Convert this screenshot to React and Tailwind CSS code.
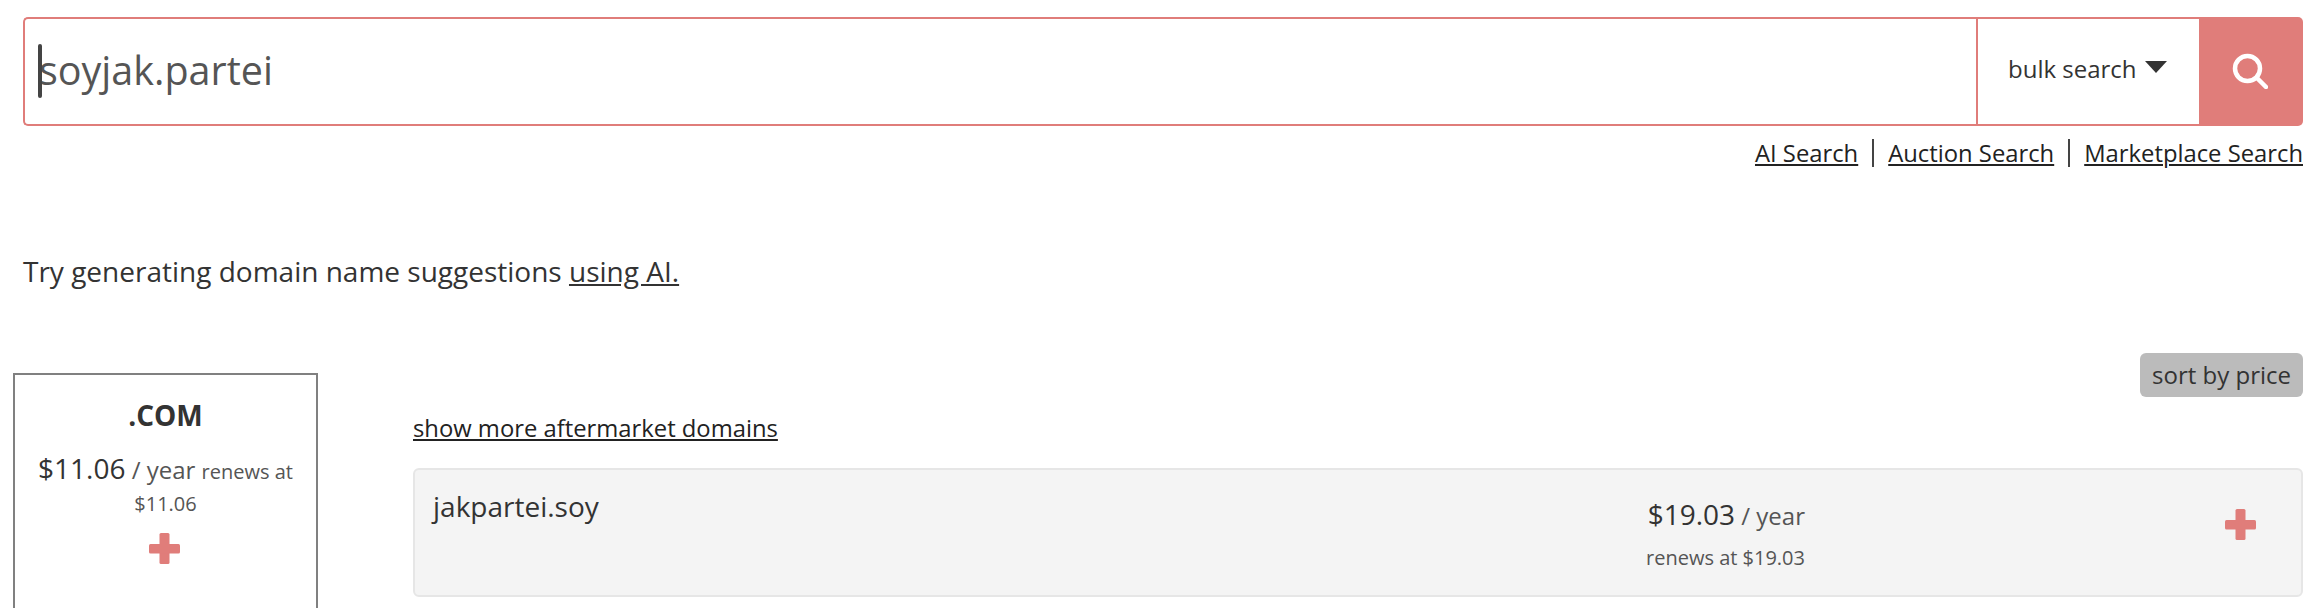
const Plus = ({ className }) => (
  <svg viewBox="0 0 31 31" className={className} fill="#e07d7a">
    <rect x="10.5" y="0" width="10" height="31" rx="1.5" />
    <rect x="0" y="11" width="31" height="9.5" rx="1.5" />
  </svg>
);

export default function App() {
  return (
    <div className="h-[608px] overflow-hidden bg-white text-[#333] font-['Open_Sans',sans-serif]">
      <div className="pl-[23px] pr-[15px] pt-[17px]">
        <div className="flex h-[109px]">
          <div className="relative flex-1 flex items-center border-2 border-r-0 border-[#e07d7a] rounded-l-[5px] pl-[14px] pb-[2px] text-[39.5px] text-[#555]">
            <span className="absolute left-[13px] top-[25px] w-[4px] h-[54px] rounded-sm bg-[#444]" />
            soyjak.partei
          </div>
          <div className="w-[223px] flex items-center pl-[30px] pb-[5px] gap-[8px] border-2 border-[#e07d7a] border-r-0 text-[24px]">
            bulk search
            <svg viewBox="0 0 22 12" className="w-[22px] h-[12px] mb-[4px]" fill="#333"><path d="M0 0H22L11 12Z" /></svg>
          </div>
          <button className="w-[104px] flex items-center justify-center bg-[#e07d7a] rounded-r-[5px]">
            <svg viewBox="0 0 36 36" className="w-[36px] h-[36px] -ml-[2px] -mt-[2px]" fill="none" stroke="#fff" strokeWidth="4.5" strokeLinecap="round">
              <circle cx="15.5" cy="15.5" r="12.5" />
              <path d="M24.5 24.5L34 34" />
            </svg>
          </button>
        </div>
        <div className="flex justify-end items-center gap-[14px] mt-[9px] text-[23.8px] text-[#222] leading-[36px]">
          <a className="underline">AI Search</a>
          <span className="w-[2px] h-[28px] bg-[#444]" />
          <a className="underline">Auction Search</a>
          <span className="w-[2px] h-[28px] bg-[#444]" />
          <a className="underline">Marketplace Search</a>
        </div>
        <p className="mt-[80px] text-[28px] leading-[40px]">
          Try generating domain name suggestions <a className="underline">using AI.</a>
        </p>
      </div>
      <div className="flex pl-[13px] pr-[15px] mt-[82px]">
        <div className="w-[305px] h-[300px] shrink-0 border-2 border-[#808080] flex flex-col items-center text-center px-[17px] pt-[21px]">
          <div className="text-[28px] font-bold leading-[38px]">.COM</div>
          <div className="mt-[16px] leading-[36px] text-[#555] text-[24px]">
            <span className="text-[28px] text-[#333]">$11.06</span> / year <span className="text-[20px]">renews at</span>
          </div>
          <div className="text-[20px] leading-[28px] text-[#555]">$11.06</div>
          <Plus className="w-[31px] h-[31px] mt-[15px] -ml-[2px]" />
        </div>
        <div className="flex-1 ml-[95px] -mt-[20px]">
          <div className="flex justify-end">
            <button className="h-[44px] px-[12px] rounded-[6px] bg-[#bbb] text-[24px]">sort by price</button>
          </div>
          <a className="block underline text-[23.8px] text-[#222] leading-[34px] mt-[14px]">show more aftermarket domains</a>
          <div className="mt-[23px] h-[129px] flex rounded-[6px] bg-[#f4f4f4] border-2 border-[#e6e6e6] pl-[18px]">
            <div className="flex-1 text-[28px] pt-[16px] leading-[40px]">jakpartei.soy</div>
            <div className="w-[300px] pt-[24px] text-right">
              <div className="text-[24px] text-[#555] leading-[40px]"><span className="text-[28px] text-[#333]">$19.03</span> / year</div>
              <div className="text-[20px] text-[#555] leading-[30px] mt-[7px]">renews at $19.03</div>
            </div>
            <div className="w-[496px] flex justify-end pr-[45px] pt-[39px]">
              <Plus className="w-[31px] h-[31px]" />
            </div>
          </div>
        </div>
      </div>
    </div>
  );
}
